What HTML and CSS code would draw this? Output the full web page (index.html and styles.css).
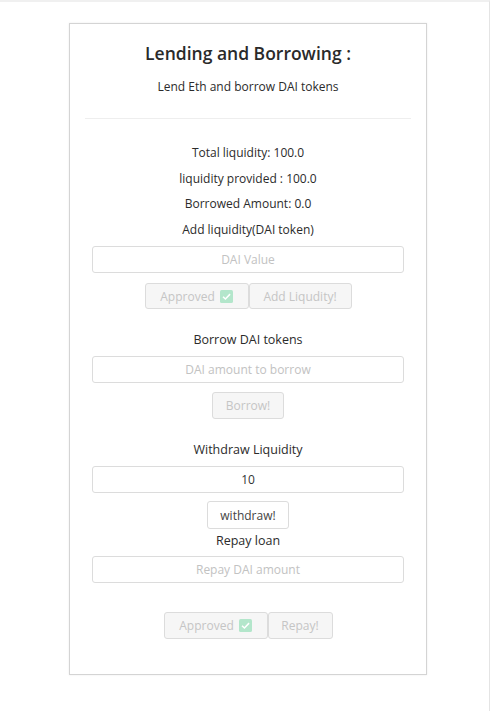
FILE: index.html
```html
<!DOCTYPE html>
<html>
<head>
<meta charset="utf-8">
<link rel="stylesheet" href="styles.css">
</head>
<body>
<div class="page">
  <div class="card">
    <h1 class="title">Lending and Borrowing :</h1>
    <p class="subtitle">Lend Eth and borrow DAI tokens</p>
    <hr class="rule">
    <div class="stats">
      <p class="stat">Total liquidity: 100.0</p>
      <p class="stat">liquidity provided : 100.0</p>
      <p class="stat">Borrowed Amount: 0.0</p>
      <p class="stat">Add liquidity(DAI token)</p>
    </div>
    <input class="field field-add" type="text" placeholder="DAI Value">
    <div class="btn-row row-add">
      <button class="btn btn-disabled btn-approved" disabled>Approved <span class="check"><svg viewBox="0 0 12 12" width="13" height="13"><rect width="12" height="12" rx="1.5" fill="#b3e6cb"/><path d="M2.8 6.2 L5 8.3 L9.3 3.8" fill="none" stroke="#fff" stroke-width="1.4"/></svg></span></button><button class="btn btn-disabled btn-add" disabled>Add Liqudity!</button>
    </div>
    <p class="label label-borrow">Borrow DAI tokens</p>
    <input class="field field-borrow" type="text" placeholder="DAI amount to borrow">
    <div class="btn-row row-borrow">
      <button class="btn btn-disabled btn-borrow" disabled>Borrow!</button>
    </div>
    <p class="label label-withdraw">Withdraw Liquidity</p>
    <input class="field field-withdraw" type="text" value="10">
    <div class="btn-row row-withdraw">
      <button class="btn btn-active btn-withdraw">withdraw!</button>
    </div>
    <p class="label label-repay">Repay loan</p>
    <input class="field field-repay" type="text" placeholder="Repay DAI amount">
    <div class="btn-row row-repay">
      <button class="btn btn-disabled btn-approved" disabled>Approved <span class="check"><svg viewBox="0 0 12 12" width="13" height="13"><rect width="12" height="12" rx="1.5" fill="#b3e6cb"/><path d="M2.8 6.2 L5 8.3 L9.3 3.8" fill="none" stroke="#fff" stroke-width="1.4"/></svg></span></button><button class="btn btn-disabled btn-repay" disabled>Repay!</button>
    </div>
  </div>
</div>
</body>
</html>
```
FILE: styles.css
```css
* { box-sizing: border-box; }
html, body { margin: 0; padding: 0; background: #fff; }
body {
  font-family: "Open Sans", "Noto Sans", sans-serif;
  color: #2b2b2b;
  border-top: 2px solid #f0f0f0;
  border-right: 1px solid #e4e4e4;
  height: 711px;
}
.page {
  padding: 21px 0 0 69px;
}
.card {
  width: 358px;
  height: 652px;
  border: 1px solid #d4d4d4;
  box-shadow: 0 0 2px rgba(0,0,0,0.08);
  display: flex;
  flex-direction: column;
  align-items: center;
  padding: 17px 15px 0;
}
.title {
  margin: 0;
  font-size: 17.5px;
  font-weight: 600;
  line-height: 24px;
  color: #2a2a2a;
}
.subtitle {
  margin: 13px 0 0;
  font-size: 12px;
  line-height: 18px;
  color: #2b2b2b;
}
.rule {
  align-self: stretch;
  margin: 22px 0 0;
  border: 0;
  border-top: 1px solid #eeeeee;
  height: 0;
}
.stats {
  margin-top: 21px;
  display: flex;
  flex-direction: column;
  align-items: center;
}
.stat {
  margin: 0;
  font-size: 12px;
  line-height: 25.5px;
  color: #2b2b2b;
}
.label {
  margin: 0;
  font-size: 12.5px;
  line-height: 20px;
  color: #2b2b2b;
}
.field {
  width: 312px;
  height: 27px;
  margin-top: 6px;
  border: 1px solid #dcdcdc;
  border-radius: 3px;
  font-family: inherit;
  font-size: 12px;
  color: #333;
  text-align: center;
  outline: none;
  background: #fff;
}
.field::placeholder { color: #c2c2c2; }
.field-add { margin-top: 4px; }
.btn-row {
  display: flex;
  justify-content: center;
}
.row-add { margin-top: 10px; }
.row-borrow { margin-top: 9px; }
.row-withdraw { margin-top: 8px; }
.row-repay { margin-top: 29px; }
.btn {
  font-family: inherit;
  font-size: 12px;
  border-radius: 3px;
  border: 1px solid #dcdcdc;
  display: inline-flex;
  align-items: center;
  justify-content: center;
  padding: 0;
}
.btn-disabled {
  background: #f6f6f6;
  color: #c5c5c5;
  height: 26px;
}
.btn-active {
  background: #fff;
  color: #444;
  height: 28px;
}
.btn-approved { width: 104px; gap: 5px; }
.btn-add { width: 103px; }
.btn-borrow { width: 72px; height: 27px; }
.btn-withdraw { width: 82px; }
.btn-repay { width: 65px; }
.row-repay .btn { height: 27px; }
.check { display: inline-flex; }
.label-borrow { margin-top: 21px; }
.label-withdraw { margin-top: 21px; }
.label-repay { margin-top: 2px; }
.field-repay { margin-top: 5px; }
```
